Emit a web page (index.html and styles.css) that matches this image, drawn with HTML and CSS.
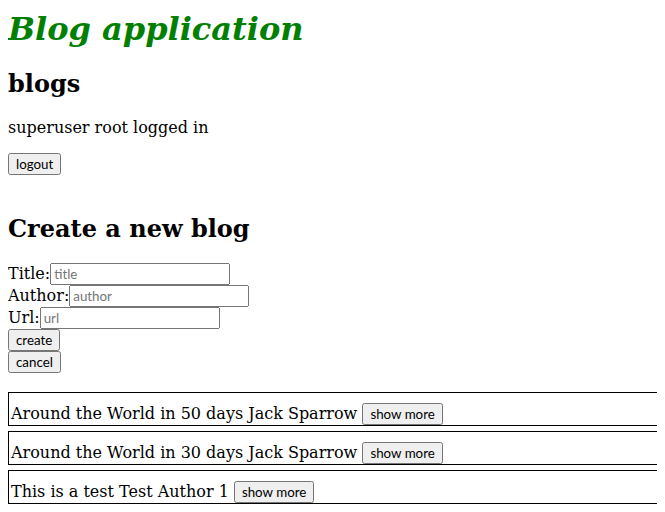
FILE: index.html
```
<!DOCTYPE html>
<html lang="en">
<head>
  <meta charset="UTF-8" />
  <title>Blog application</title>
  <link rel="stylesheet" href="styles.css">
</head>
<body>
  <h1 class="app-title">Blog application</h1>
  <h2>blogs</h2>
  <p>superuser root logged in</p>
  <div class="session">
    <button type="button">logout</button>
  </div>

  <div class="create">
    <h2>Create a new blog</h2>
    <form>
      <div>Title:<input type="text" placeholder="title"></div>
      <div>Author:<input type="text" placeholder="author"></div>
      <div>Url:<input type="text" placeholder="url"></div>
      <div><button type="submit">create</button></div>
    </form>
    <div><button type="button">cancel</button></div>
  </div>

  <div class="blog-list">
    <div class="blog">Around the World in 50 days Jack Sparrow <button type="button">show more</button></div>
    <div class="blog">Around the World in 30 days Jack Sparrow <button type="button">show more</button></div>
    <div class="blog">This is a test Test Author 1 <button type="button">show more</button></div>
  </div>
</body>
</html>
```

FILE: styles.css
```
html { overflow: hidden; }
body {
  font-family: "DejaVu Serif", serif;
  margin: 8px;
}
button, input {
  font-family: Lato, "DejaVu Sans", sans-serif;
  font-size: 13.33px;
}
input {
  width: 180px;
  box-sizing: border-box;
  height: 22px;
}
.app-title {
  color: green;
  font-style: italic;
  margin-top: 2px;
}
.session { margin-bottom: 39px; }
.create { margin-bottom: 19px; }
.create form { margin: 0; }
.blog {
  padding-top: 10px;
  padding-left: 2px;
  border: 1px solid;
  margin-bottom: 5px;
  margin-right: -12px;
}
```
